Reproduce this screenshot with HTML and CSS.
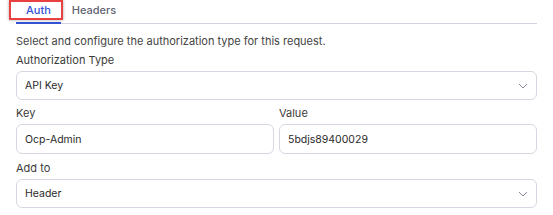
FILE: index.html
```html
<!DOCTYPE html>
<html lang="en">
<head>
    <meta charset="UTF-8">
    <title>Auth</title>
    <link rel="stylesheet" href="styles.css">
</head>
<body>
    <div class="painel">
        <div class="abas">
            <div class="aba ativa">Auth<span class="destaque"></span></div>
            <div class="aba">Headers</div>
        </div>

        <p class="descricao">Select and configure the authorization type for this request.</p>

        <div class="campo">
            <label>Authorization Type</label>
            <div class="caixa seletor">
                <span>API Key</span>
                <svg width="10" height="6" viewBox="0 0 10 6"><path d="M1 1l4 4 4-4" fill="none" stroke="#8a8a99" stroke-width="1"/></svg>
            </div>
        </div>

        <div class="linha">
            <div class="campo">
                <label>Key</label>
                <div class="caixa">Ocp-Admin</div>
            </div>
            <div class="campo">
                <label>Value</label>
                <div class="caixa">5bdjs89400029</div>
            </div>
        </div>

        <div class="campo">
            <label>Add to</label>
            <div class="caixa seletor">
                <span>Header</span>
                <svg width="10" height="6" viewBox="0 0 10 6"><path d="M1 1l4 4 4-4" fill="none" stroke="#8a8a99" stroke-width="1"/></svg>
            </div>
        </div>
    </div>
</body>
</html>
```

FILE: styles.css
```css
body {
    margin: 0;
    padding: 0;
    background-color: #ffffff;
    font-family: "Inter", "Liberation Sans", sans-serif;
    font-size: 11px;
    color: #333;
}

.painel {
    padding: 0 16px;
    width: 521px;
}

.abas {
    display: flex;
    height: 23px;
    border-bottom: 1px solid #d6d3df;
}

.aba {
    position: relative;
    padding: 2px 10px 0 10px;
    margin-right: 1px;
    font-size: 11px;
    font-weight: 500;
    color: #5f6370;
    line-height: 16px;
}

.aba.ativa {
    color: #3553d6;
    border-bottom: 2px solid #3553d6;
    margin-bottom: -1px;
}

/* marcação vermelha por cima da aba */
.aba .destaque {
    position: absolute;
    top: 0;
    left: -7px;
    width: 50px;
    height: 16px;
    border: 2px solid #e8413f;
    box-shadow: 0 0 3px rgba(0, 0, 0, 0.35);
}

.descricao {
    margin: 9px 0 3px 0;
    line-height: 16px;
    color: #444;
}

.campo {
    display: flex;
    flex-direction: column;
    flex: 1;
    margin-bottom: 5px;
}

.campo label {
    line-height: 16px;
    margin-bottom: 3px;
    color: #3a3a3a;
}

.caixa {
    height: 27px;
    border: 1px solid #d8d6e0;
    border-radius: 6px;
    padding: 0 8px;
    display: flex;
    align-items: center;
    color: #2a2a2a;
    font-size: 10.5px;
}

.seletor {
    justify-content: space-between;
}

.linha {
    display: flex;
    gap: 5px;
}

.linha .campo {
    margin-bottom: 6px;
}

.linha .caixa {
    height: 28px;
}
```
